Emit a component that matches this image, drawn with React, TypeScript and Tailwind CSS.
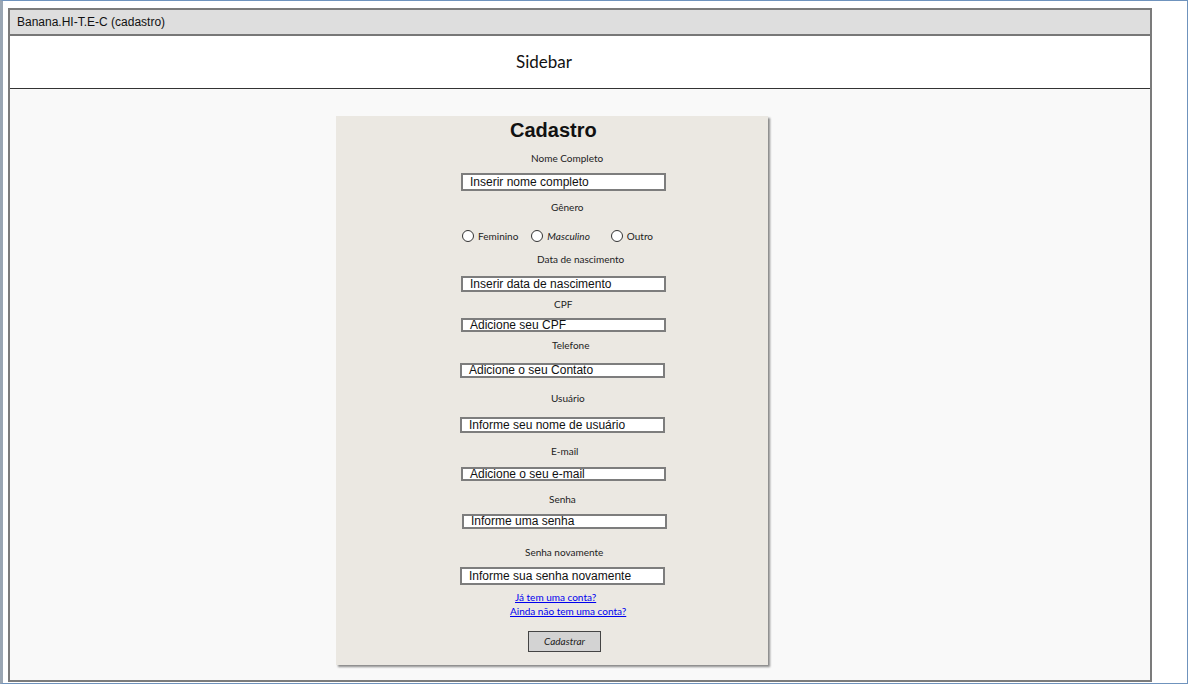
import React from "react";

const sketch = "font-['Lato','Open_Sans',sans-serif]";
const arial = "font-['Liberation_Sans',Arial,sans-serif]";

type Row =
  | { kind: "label"; text: string; ml: string; mt: string }
  | { kind: "input"; text: string; ml: string; mt: string; h: string };

const rows: Row[] = [
  { kind: "label", text: "Nome Completo", ml: "ml-[195px]", mt: "mt-[10px]" },
  { kind: "input", text: "Inserir nome completo", ml: "ml-[125px]", mt: "mt-[9px]", h: "h-[18px]" },
];

const rows2: Row[] = [
  { kind: "label", text: "Data de nascimento", ml: "ml-[201px]", mt: "mt-[11px]" },
  { kind: "input", text: "Inserir data de nascimento", ml: "ml-[125px]", mt: "mt-[11px]", h: "h-[16px]" },
  { kind: "label", text: "CPF", ml: "ml-[218px]", mt: "mt-[6px]" },
  { kind: "input", text: "Adicione seu CPF", ml: "ml-[125px]", mt: "mt-[8px]", h: "h-[14px]" },
  { kind: "label", text: "Telefone", ml: "ml-[216px]", mt: "mt-[7px]" },
  { kind: "input", text: "Adicione o seu Contato", ml: "ml-[124px]", mt: "mt-[12px]", h: "h-[15px]" },
  { kind: "label", text: "Usuário", ml: "ml-[215px]", mt: "mt-[14px]" },
  { kind: "input", text: "Informe seu nome de usuário", ml: "ml-[124px]", mt: "mt-[13px]", h: "h-[16px]" },
  { kind: "label", text: "E-mail", ml: "ml-[215px]", mt: "mt-[12px]" },
  { kind: "input", text: "Adicione o seu e-mail", ml: "ml-[125px]", mt: "mt-[10px]", h: "h-[14px]" },
  { kind: "label", text: "Senha", ml: "ml-[213px]", mt: "mt-[12px]" },
  { kind: "input", text: "Informe uma senha", ml: "ml-[126px]", mt: "mt-[9px]", h: "h-[15px]" },
  { kind: "label", text: "Senha novamente", ml: "ml-[189px]", mt: "mt-[17px]" },
  { kind: "input", text: "Informe sua senha novamente", ml: "ml-[124px]", mt: "mt-[9px]", h: "h-[18px]" },
];

const renderRow = (r: Row) =>
  r.kind === "label" ? (
    <div key={r.text} className={`${r.ml} ${r.mt} ${sketch} h-[12px] text-[10px] leading-[12px] text-[#222]`}>
      {r.text}
    </div>
  ) : (
    <div
      key={r.text}
      className={`${r.ml} ${r.mt} ${r.h} ${arial} w-[205px] overflow-hidden border-2 border-[#7d7d7d] bg-white pl-[7px] text-[12px] leading-[13px] text-[#111] flex items-center`}
    >
      {r.text}
    </div>
  );

const Radio = ({ label, italic }: { label: string; italic?: boolean }) => (
  <div className="flex items-center gap-[4px]">
    <span className="block h-[12px] w-[12px] rounded-full border border-[#333] bg-white" />
    <span className={`${sketch} text-[10px] leading-[12px] text-[#222] ${italic ? "italic" : ""}`}>{label}</span>
  </div>
);

const App: React.FC = () => {
  return (
    <div className="w-[1188px] h-[684px] bg-white border-t border-r border-b border-l-[3px] border-t-[#6f93bd] border-r-[#6f93bd] border-b-[#6f93bd] border-l-[#9aa6b3] pt-[7px] pl-[5px]">
      <div className="w-[1144px] h-[674px] border-2 border-[#7b7b7b] flex flex-col bg-[#f9f9f9]">
        <div className={`h-[26px] shrink-0 bg-[#dedede] border-b-2 border-[#777] pl-[7px] flex items-center ${arial} text-[12px] text-[#111]`}>
          Banana.HI-T.E-C (cadastro)
        </div>
        <div className={`h-[53px] shrink-0 bg-white border-b border-[#333] flex items-center pl-[506px] ${sketch} text-[17px] text-[#111]`}>
          Sidebar
        </div>
        <div className="flex-1">
          <div className="ml-[326px] mt-[27px] w-[432px] h-[549px] bg-[#ebe8e2] shadow-[2px_2px_2px_rgba(0,0,0,0.45)] pt-[2px] flex flex-col items-start">
            <div className={`ml-[174px] h-[24px] ${arial} text-[20px] font-bold leading-[24px] text-[#111]`}>Cadastro</div>
            {rows.map(renderRow)}
            <div className={`ml-[215px] mt-[10px] ${sketch} h-[12px] text-[10px] leading-[12px] text-[#222]`}>Gênero</div>
            <div className="ml-[126px] mt-[17px] flex items-center">
              <Radio label="Feminino" />
              <div className="ml-[13px]">
                <Radio label="Masculino" italic />
              </div>
              <div className="ml-[21px]">
                <Radio label="Outro" />
              </div>
            </div>
            {rows2.map(renderRow)}
            <a href="#" className={`ml-[179px] mt-[6px] ${sketch} h-[12px] text-[10px] leading-[12px] text-[#0000ee] underline`}>
              Já tem uma conta?
            </a>
            <a href="#" className={`ml-[174px] mt-[2px] ${sketch} h-[12px] text-[10px] leading-[12px] text-[#0000ee] underline`}>
              Ainda não tem uma conta?
            </a>
            <button className={`ml-[192px] mt-[14px] w-[73px] h-[21px] bg-[#d3d3d3] border border-[#444] ${sketch} italic text-[10px] text-[#222]`}>
              Cadastrar
            </button>
          </div>
        </div>
      </div>
    </div>
  );
};

export default App;
